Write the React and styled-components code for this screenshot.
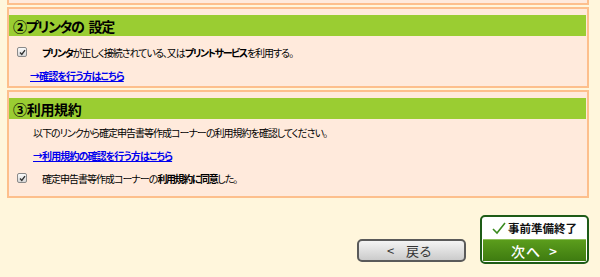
import React from "react";
import styled, { createGlobalStyle } from "styled-components";

const Global = createGlobalStyle`
  body {
    margin: 0;
    background: #fff6dc;
    font-family: "Noto Sans CJK JP", "Noto Sans", sans-serif;
    font-feature-settings: "palt";
    color: #000;
  }
`;

const Page = styled.div`
  width: 582px;
  margin-left: 7px;
  display: flex;
  flex-direction: column;
  gap: 2px;
`;

const Panel = styled.section`
  background: #ffeadc;
  border: 2px solid #fdbf8c;
  border-top: ${(p) => (p.$stub ? "none" : "2px solid #fdbf8c")};
  height: ${(p) => (p.$stub ? "3px" : "auto")};
  padding: ${(p) => (p.$stub ? "0" : "6px 1px 0 0")};
`;

const Header = styled.h2`
  margin: 0;
  height: 21px;
  background: #9acd32;
  display: flex;
  align-items: center;
  padding-left: 4px;
  font-size: 14px;
  font-weight: bold;
  letter-spacing: ${(p) => p.$spacing || 0}px;
  white-space: pre;
`;

const Gap = styled.span`
  display: inline-block;
  width: 5px;
`;

const Body = styled.div`
  display: flex;
  flex-direction: column;
  gap: 9px;
  padding: ${(p) => p.$pad};
`;

const Row = styled.div`
  height: 14px;
  display: flex;
  align-items: center;
  padding-left: ${(p) => p.$indent || 8}px;
  font-size: 10px;
  letter-spacing: -1px;
  white-space: nowrap;
`;

const Box = styled.span`
  width: 10px;
  height: 10px;
  box-sizing: border-box;
  border: 1px solid #8a8a8a;
  border-radius: 2px;
  background: linear-gradient(#fafafa, #d8d8d8);
  margin-right: 15px;
  display: flex;
  align-items: center;
  justify-content: center;
  flex-shrink: 0;
`;

const Strong = styled.b`
  font-weight: bold;
  letter-spacing: -1.4px;
`;

const Link = styled.a`
  color: #0000ee;
  font-weight: bold;
  text-decoration: underline;
  letter-spacing: -0.9px;
`;

const Buttons = styled.div`
  display: flex;
  justify-content: flex-end;
  align-items: flex-end;
  gap: 14px;
  margin-top: 15px;
`;

const BackButton = styled.button`
  width: 109px;
  height: 23px;
  margin-bottom: 2px;
  border: 2px solid #5a5a5a;
  border-radius: 5px;
  background: linear-gradient(#f4f4f4, #cbcbcb);
  color: #333;
  font-family: inherit;
  font-size: 13px;
  display: flex;
  align-items: center;
  justify-content: center;
  gap: 12px;
  padding: 0 4px 0 0;
`;

const NextButton = styled.button`
  width: 109px;
  height: 49px;
  box-sizing: border-box;
  border: 2px solid #1e5c17;
  border-radius: 5px;
  background: #fff;
  padding: 0 1px 1px;
  display: flex;
  flex-direction: column;
  font-family: inherit;
`;

const Done = styled.span`
  height: 22px;
  display: flex;
  align-items: center;
  justify-content: center;
  gap: 2px;
  font-size: 11.5px;
  font-weight: bold;
  color: #111;
`;

const Next = styled.span`
  flex: 1;
  background: linear-gradient(#5b9d1c, #3e7b10);
  border-top: 1px solid #8fc05a;
  color: #fff;
  font-size: 14px;
  font-weight: 500;
  display: flex;
  align-items: center;
  justify-content: center;
  gap: 8px;
  letter-spacing: 1px;
`;

function Check() {
  return (
    <Box>
      <svg width="7" height="7" viewBox="0 0 7 7">
        <path d="M1 3.6 L2.8 5.4 L6 1.2" fill="none" stroke="#333" strokeWidth="1.4" />
      </svg>
    </Box>
  );
}

export default function App() {
  return (
    <>
      <Global />
      <Page>
        <Panel $stub />
        <Panel>
          <Header $spacing={-1.3}>
            ②プリンタの<Gap />設定
          </Header>
          <Body $pad="9px 0 4px">
            <Row>
              <Check />
              <span>
                <Strong>プリンタ</Strong>が正しく接続されている、又は
                <Strong>プリントサービス</Strong>を利用する。
              </span>
            </Row>
            <Row $indent={21}>
              <Link href="#">→確認を行う方はこちら</Link>
            </Row>
          </Body>
        </Panel>
        <Panel>
          <Header $spacing={-0.3}>③利用規約</Header>
          <Body $pad="6px 0 11px">
            <Row $indent={24}>
              以下のリンクから確定申告書等作成コーナーの利用規約を確認してください。
            </Row>
            <Row $indent={24}>
              <Link href="#">→利用規約の確認を行う方はこちら</Link>
            </Row>
            <Row>
              <Check />
              <span>
                確定申告書等作成コーナーの<Strong>利用規約に同意</Strong>した。
              </span>
            </Row>
          </Body>
        </Panel>
        <Buttons>
          <BackButton>
            <span>&lt;</span>
            <span>戻る</span>
          </BackButton>
          <NextButton>
            <Done>
              <svg width="14" height="13" viewBox="0 0 14 13">
                <path d="M1 7 L5 11 L13 1" fill="none" stroke="#3a8a1e" strokeWidth="1.6" />
              </svg>
              事前準備終了
            </Done>
            <Next>
              <span>次へ</span>
              <span>&gt;</span>
            </Next>
          </NextButton>
        </Buttons>
      </Page>
    </>
  );
}
